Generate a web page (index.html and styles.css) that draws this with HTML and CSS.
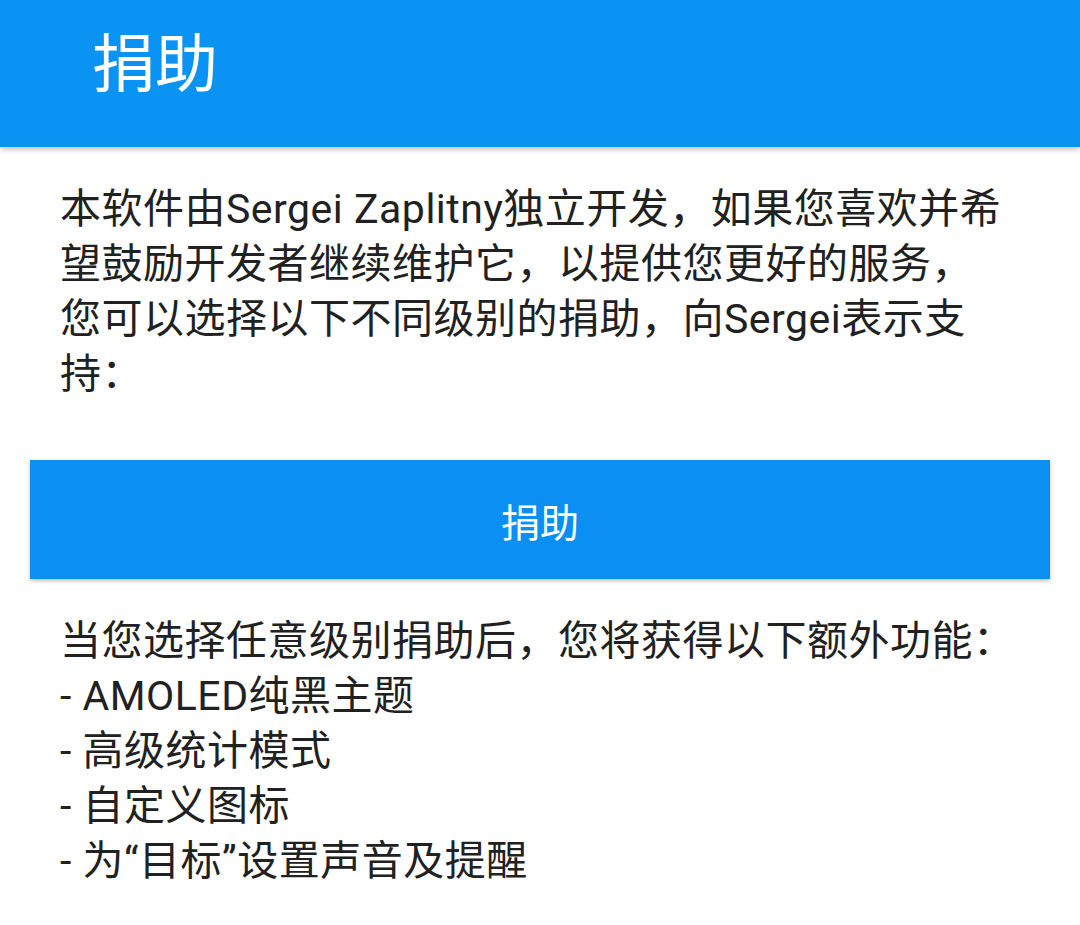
FILE: index.html
```html
<!DOCTYPE html>
<html lang="zh-CN">
<head>
<meta charset="utf-8">
<title>捐助</title>
<link rel="stylesheet" href="styles.css">
</head>
<body>
<header class="appbar">
  <h1 class="appbar-title">捐助</h1>
</header>
<main class="content">
  <p class="intro">本软件由Sergei Zaplitny独立开发，如果您喜欢并希望鼓励开发者继续维护它，以提供您更好的服务，您可以选择以下不同级别的捐助，向Sergei表示支持：</p>
  <button class="donate-btn" type="button">捐助</button>
  <div class="features">
    <p class="features-lead">当您选择任意级别捐助后，您将获得以下额外功能：</p>
    <ul class="feature-list">
      <li>- AMOLED纯黑主题</li>
      <li>- 高级统计模式</li>
      <li>- 自定义图标</li>
      <li>- 为“目标”设置声音及提醒</li>
    </ul>
  </div>
</main>
</body>
</html>
```
FILE: styles.css
```css
html, body {
  margin: 0;
  padding: 0;
  background: #ffffff;
}
body {
  width: 1080px;
  height: 925px;
  overflow: hidden;
  font-family: Roboto, "Noto Sans CJK SC", sans-serif;
  color: #212121;
}
.appbar {
  height: 147px;
  background: #0b93f4;
  box-shadow: 0 2px 6px rgba(0, 0, 0, 0.28);
  display: flex;
  align-items: center;
  padding: 0 0 18px 92px;
  box-sizing: border-box;
  position: relative;
  z-index: 1;
}
.appbar-title {
  margin: 0;
  font-size: 63px;
  font-weight: 400;
  color: #ffffff;
  line-height: 1;
}
.content {
  display: flex;
  flex-direction: column;
}
.intro {
  margin: 35px 0 0 0;
  padding: 0 70px 0 60px;
  font-size: 41px;
  letter-spacing: 0.5px;
  line-height: 55px;
}
.donate-btn {
  margin: 58px 30px 0 30px;
  height: 119px;
  border: none;
  background: #0b8ff3;
  color: #ffffff;
  font-family: inherit;
  font-size: 39px;
  box-shadow: 0 2px 4px rgba(0, 0, 0, 0.25);
  padding: 0;
}
.features {
  margin-top: 35px;
  padding: 0 30px 0 60px;
  font-size: 41px;
  letter-spacing: 0.5px;
  line-height: 55px;
}
.features-lead {
  margin: 0;
}
.feature-list {
  list-style: none;
  margin: 0;
  padding: 0;
}
```
